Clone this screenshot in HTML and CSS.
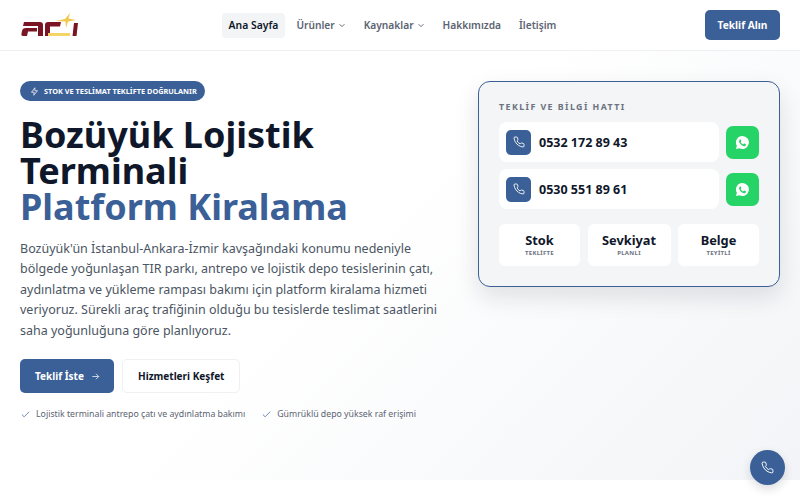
FILE: index.html

```html
<!DOCTYPE html>
<html lang="tr">
<head>
  <meta charset="UTF-8" />
  <meta name="viewport" content="width=device-width, initial-scale=1.0"/>
  <title>Platform Kiralama</title>
  <link rel="stylesheet" href="styles.css">
</head>
<body>
  <svg class="sprite" width="0" height="0">
    <symbol id="phone" viewBox="0 0 24 24"><path d="M22 16.900v3a2 2 0 0 1-2.200 2 19.800 19.800 0 0 1-8.600-3.100 19.500 19.500 0 0 1-6-6A19.800 19.800 0 0 1 2.100 4.200 2 2 0 0 1 4.100 2h3a2 2 0 0 1 2 1.700c.1 1 .4 1.900.7 2.800a2 2 0 0 1-.5 2.100L8.100 9.900a16 16 0 0 0 6 6l1.300-1.300a2 2 0 0 1 2.100-.4c.9.3 1.800.6 2.800.7a2 2 0 0 1 1.700 2z"/></symbol>
    <symbol id="whatsapp" viewBox="0 0 24 24"><path fill-rule="evenodd" d="M12 1.500A10.400 10.400 0 0 0 3 17.200L1.600 22.500l5.400-1.400A10.400 10.400 0 1 0 12 1.500zM8.400 6.900c.2 0 .5 0 .7.5l.9 2.100c.1.2.1.4 0 .6-.2.4-.5.7-.8 1-.2.2-.2.4-.1.6.9 1.600 2 2.600 3.600 3.300.2.1.4.1.6-.1l1-1.200c.2-.3.4-.2.7-.1l2 1c.3.1.5.2.5.4.1.4 0 1.300-.4 1.800-.6.7-1.700 1.200-2.700 1-1.300-.2-3.200-.9-5-2.600-1.500-1.400-2.600-3.100-2.900-4.300-.3-1.400.4-2.700 1.300-3.700.2-.2.400-.3.600-.3z"/></symbol>
    <symbol id="check" viewBox="0 0 24 24"><path d="M20 6 9 17l-5-5"/></symbol>
  </svg>

  <header class="topbar">
    <a class="logo" href="#">
      <svg width="60" height="26" viewBox="0 0 60 26">
        <path d="M4 10h16q3 0 3 3v11h-5V14H3zM6 16h11v3.500H8L7 24H3q-2 0-1.500-2.500l.5-2.500q.5-3 4-3z" fill="#7a1526"/>
        <path d="M25 24V13q0-3 3-3h13l-1 4.500H30V24z" fill="#7a1526"/>
        <path d="M54 11h4l-1.500 13h-4z" fill="#7a1526"/>
        <path d="M50 1l-1.500 5.500L56 8l-8 1.500L46 16l-.5-6.500L36 9l9-2z" fill="#f1c84b"/>
        <rect x="28" y="21" width="22" height="3" fill="#f3d56a"/>
      </svg>
    </a>
    <nav class="nav">
      <a class="nav-link active" href="#">Ana Sayfa</a>
      <a class="nav-link" href="#">Ürünler <svg class="chev" viewBox="0 0 10 10"><path d="M2 4l3 3 3-3"/></svg></a>
      <a class="nav-link" href="#">Kaynaklar <svg class="chev" viewBox="0 0 10 10"><path d="M2 4l3 3 3-3"/></svg></a>
      <a class="nav-link" href="#">Hakkımızda</a>
      <a class="nav-link" href="#">İletişim</a>
    </nav>
    <a class="btn-top" href="#">Teklif Alın</a>
  </header>

  <section class="hero">
    <div class="hero-left">
      <div class="badge">
        <svg class="bolt" viewBox="0 0 24 24"><path d="M13 2 4 14h7l-1 8 10-12h-7z"/></svg>
        STOK VE TESLİMAT TEKLİFTE DOĞRULANIR
      </div>
      <h1>Bozüyük Lojistik Terminali <span>Platform Kiralama</span></h1>
      <p class="lead">Bozüyük'ün İstanbul-Ankara-İzmir kavşağındaki konumu nedeniyle bölgede yoğunlaşan TIR parkı, antrepo ve lojistik depo tesislerinin çatı, aydınlatma ve yükleme rampası bakımı için platform kiralama hizmeti veriyoruz. Sürekli araç trafiğinin olduğu bu tesislerde teslimat saatlerini saha yoğunluğuna göre planlıyoruz.</p>
      <div class="actions">
        <a class="btn primary" href="#">Teklif İste
          <svg class="arrow" viewBox="0 0 24 24"><path d="M5 12h14M13 6l6 6-6 6"/></svg>
        </a>
        <a class="btn ghost" href="#">Hizmetleri Keşfet</a>
      </div>
      <ul class="checks">
        <li><svg class="tick"><use href="#check"/></svg>Lojistik terminali antrepo çatı ve aydınlatma bakımı</li>
        <li><svg class="tick"><use href="#check"/></svg>Gümrüklü depo yüksek raf erişimi</li>
      </ul>
    </div>

    <aside class="card">
      <div class="card-title">TEKLİF VE BİLGİ HATTI</div>
      <div class="line">
        <a class="tel" href="#"><span class="tel-icon"><svg><use href="#phone"/></svg></span>0532 172 89 43</a>
        <a class="wa" href="#"><svg><use href="#whatsapp"/></svg></a>
      </div>
      <div class="line">
        <a class="tel" href="#"><span class="tel-icon"><svg><use href="#phone"/></svg></span>0530 551 89 61</a>
        <a class="wa" href="#"><svg><use href="#whatsapp"/></svg></a>
      </div>
      <div class="stats">
        <div class="stat"><strong>Stok</strong><small>TEKLİFTE</small></div>
        <div class="stat"><strong>Sevkiyat</strong><small>PLANLI</small></div>
        <div class="stat"><strong>Belge</strong><small>TEYİTLİ</small></div>
      </div>
    </aside>
  </section>

  <a class="float-call" href="#"><svg><use href="#phone"/></svg></a>
</body>
</html>
```

FILE: styles.css

```css
* {
  box-sizing: border-box;
}
body {
  margin: 0;
  font-family: "Noto Sans", sans-serif;
  background-color: #fff;
  color: #0f172a;
  height: 500px;
  overflow: hidden;
}
a {
  text-decoration: none;
  color: inherit;
}
.sprite {
  display: block;
  height: 0;
}
.topbar {
  height: 51px;
  padding: 0 20px;
  display: flex;
  align-items: center;
  justify-content: space-between;
  border-bottom: 1px solid #eef0f3;
}
.logo {
  display: flex;
  width: 60px;
}
.nav {
  display: flex;
  gap: 4px;
  align-items: center;
}
.nav-link {
  padding: 0 7px;
  height: 25px;
  line-height: 25px;
  font-size: 10.2px;
  font-weight: 600;
  color: #5b6472;
  border-radius: 4px;
  display: flex;
  align-items: center;
  gap: 3px;
}
.nav-link.active {
  padding: 0 7px;
  font-size: 10.4px;
  background-color: #f3f4f6;
  color: #0f172a;
}
.chev {
  width: 8px;
  height: 8px;
  fill: none;
  stroke: #5b6472;
  stroke-width: 1.2;
}
.btn-top {
  width: 75px;
  height: 30px;
  line-height: 30px;
  text-align: center;
  background-color: #3b5f97;
  color: #fff;
  font-size: 10.2px;
  font-weight: 700;
  border-radius: 5px;
}
.hero {
  height: 429px;
  padding: 30px 20px 0;
  display: flex;
  justify-content: space-between;
  align-items: flex-start;
  background: linear-gradient(135deg, #fff 45%, #f2f4f7 100%);
}
.hero-left {
  width: 420px;
}
.badge {
  display: flex;
  width: 185px;
  align-items: center;
  gap: 5px;
  height: 20px;
  padding-left: 10px;
  background-color: #3b5f97;
  color: #fff;
  font-size: 7.35px;
  font-weight: 700;
  white-space: nowrap;
  border-radius: 10px;
}
.bolt {
  width: 9px;
  height: 9px;
  fill: none;
  stroke: #fff;
  stroke-width: 2;
}
h1 {
  margin: 16px 0 0;
  font-size: 36px;
  line-height: 36px;
  font-weight: 700;
  color: #0f172a;
  width: 330px;
}
h1 span {
  color: #3b5f97;
  display: block;
}
.lead {
  margin: 14px 0 0;
  font-size: 12.5px;
  line-height: 20.4px;
  color: #4b5563;
}
.actions {
  display: flex;
  gap: 8px;
  margin-top: 18px;
}
.btn {
  height: 34px;
  display: flex;
  align-items: center;
  gap: 6px;
  padding-left: 15px;
  font-size: 10px;
  font-weight: 700;
  border-radius: 5px;
}
.primary {
  width: 94px;
  background-color: #3b5f97;
  color: #fff;
}
.ghost {
  width: 118px;
  background-color: #fff;
  border: 1px solid #eef0f3;
  color: #0f172a;
}
.arrow {
  width: 11px;
  height: 11px;
  fill: none;
  stroke: #fff;
  stroke-width: 1.6;
}
.checks {
  list-style: none;
  display: flex;
  gap: 16px;
  margin: 15px 0 0;
  padding: 0;
  font-size: 8.75px;
  line-height: 12px;
  white-space: nowrap;
  color: #5b6472;
}
.checks li {
  display: flex;
  align-items: center;
  gap: 5px;
}
.tick {
  width: 11px;
  height: 11px;
  fill: none;
  stroke: #3b5f97;
  stroke-width: 1.6;
}
.card {
  width: 302px;
  height: 206px;
  padding: 20px;
  background-color: #f3f5f7;
  border: 1.5px solid #3b5f97;
  border-radius: 12px;
  box-shadow: 0 10px 24px rgba(15, 23, 42, 0.12);
}
.card-title {
  font-size: 8.8px;
  font-weight: 700;
  letter-spacing: 1.45px;
  color: #6b7280;
  line-height: 10px;
  margin-bottom: 10px;
  white-space: nowrap;
}
.line {
  display: flex;
  align-items: center;
  gap: 7px;
  margin-bottom: 7px;
}
.tel {
  flex: 1;
  height: 40px;
  background-color: #fff;
  border-radius: 8px;
  padding: 0 7px;
  display: flex;
  align-items: center;
  gap: 8px;
  font-size: 12.5px;
  font-weight: 700;
  color: #0f172a;
}
.tel-icon {
  width: 25px;
  height: 25px;
  background-color: #3b5f97;
  border-radius: 5px;
  display: flex;
  align-items: center;
  justify-content: center;
}
.tel-icon svg {
  width: 12px;
  height: 12px;
  fill: none;
  stroke: #fff;
  stroke-width: 1.8;
}
.wa {
  width: 33px;
  height: 33px;
  background-color: #25d366;
  border-radius: 7px;
  display: flex;
  align-items: center;
  justify-content: center;
}
.wa svg {
  width: 15px;
  height: 15px;
  fill: #fff;
}
.stats {
  display: grid;
  grid-template-columns: 81px 83px 81px;
  justify-content: space-between;
  margin-top: 15px;
}
.stat {
  height: 42px;
  background-color: #fff;
  border-radius: 6px;
  text-align: center;
  padding-top: 8px;
}
.stat strong {
  display: block;
  font-size: 12.8px;
  line-height: 16px;
  font-weight: 700;
  color: #0f172a;
}
.stat small {
  display: block;
  margin-top: 1px;
  font-size: 6px;
  line-height: 8px;
  font-weight: 700;
  letter-spacing: 0.05em;
  color: #6b7280;
}
.float-call {
  position: fixed;
  right: 15px;
  bottom: 15px;
  width: 35px;
  height: 35px;
  border-radius: 50%;
  background-color: #3b5f97;
  display: flex;
  align-items: center;
  justify-content: center;
  box-shadow: 0 4px 10px rgba(15, 23, 42, 0.15);
}
.float-call svg {
  width: 13px;
  height: 13px;
  fill: none;
  stroke: #fff;
  stroke-width: 1.8;
}
```
